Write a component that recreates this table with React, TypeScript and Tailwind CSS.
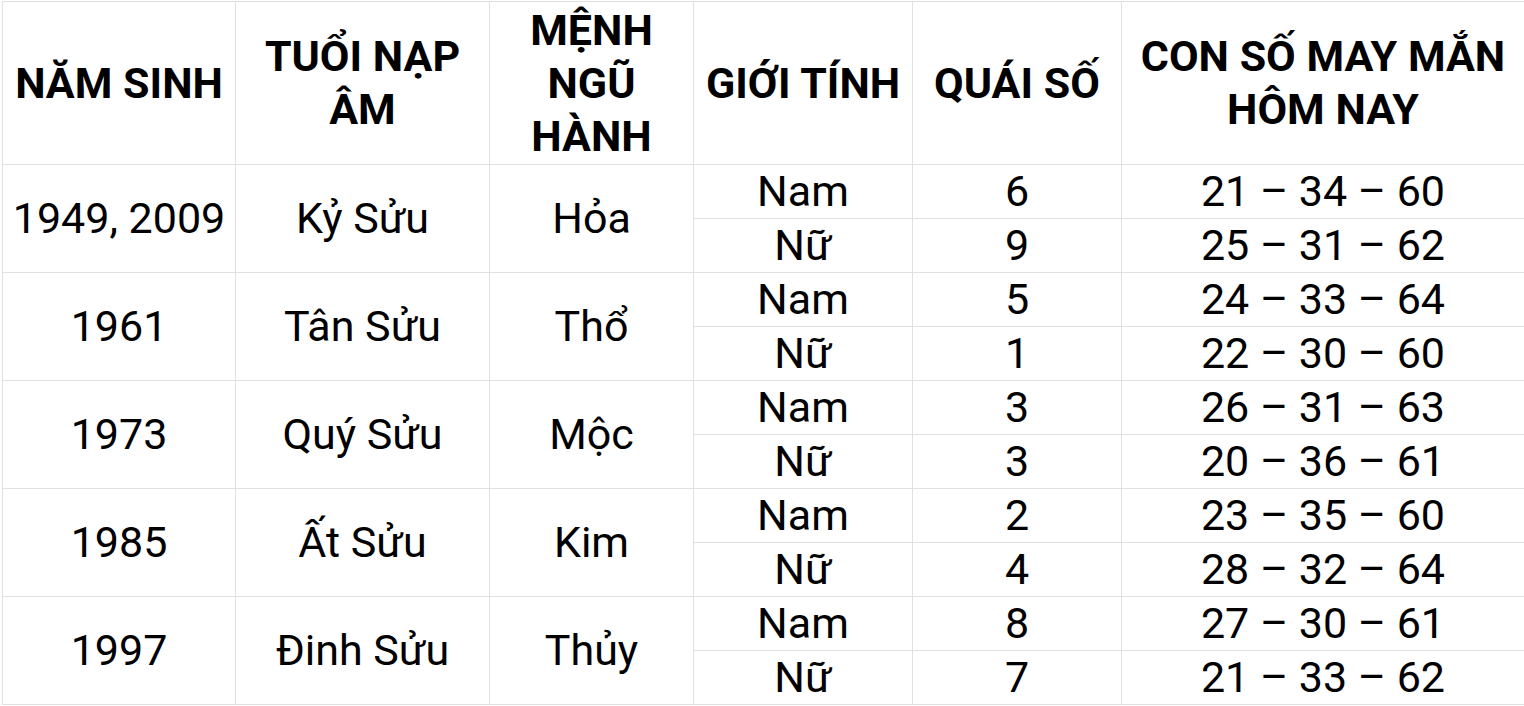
import React from "react";

const groups = [
  { year: "1949, 2009", tuoi: "Kỷ Sửu", menh: "Hỏa", rows: [["Nam", "6", "21 – 34 – 60"], ["Nữ", "9", "25 – 31 – 62"]] },
  { year: "1961", tuoi: "Tân Sửu", menh: "Thổ", rows: [["Nam", "5", "24 – 33 – 64"], ["Nữ", "1", "22 – 30 – 60"]] },
  { year: "1973", tuoi: "Quý Sửu", menh: "Mộc", rows: [["Nam", "3", "26 – 31 – 63"], ["Nữ", "3", "20 – 36 – 61"]] },
  { year: "1985", tuoi: "Ất Sửu", menh: "Kim", rows: [["Nam", "2", "23 – 35 – 60"], ["Nữ", "4", "28 – 32 – 64"]] },
  { year: "1997", tuoi: "Đinh Sửu", menh: "Thủy", rows: [["Nam", "8", "27 – 30 – 61"], ["Nữ", "7", "21 – 33 – 62"]] },
];

const headers = [
  ["NĂM SINH"],
  ["TUỔI NẠP", "ÂM"],
  ["MỆNH", "NGŨ", "HÀNH"],
  ["GIỚI TÍNH"],
  ["QUÁI SỐ"],
  ["CON SỐ MAY MẮN", "HÔM NAY"],
];

export default function App() {
  return (
    <div className="w-[1524px] h-[706px] bg-white overflow-hidden font-['Roboto','Noto_Sans',sans-serif]">
      <div className="mt-px ml-[2px] bg-[#e0e0e0] pt-px pl-px pb-px grid gap-px grid-cols-[232px_253px_203px_218px_208px_1fr] grid-rows-[162px_repeat(10,53px)] text-black">
        {headers.map((h, i) => (
          <div key={i} className="bg-white flex flex-col items-center justify-center font-bold text-[43px] leading-[53px] text-center">
            {h.map((l, j) => (
              <div key={j}>{l}</div>
            ))}
          </div>
        ))}
        {groups.map((g, gi) => (
          <React.Fragment key={gi}>
            <div className="bg-white row-span-2 flex items-center justify-center text-[43px]">{g.year}</div>
            <div className="bg-white row-span-2 flex items-center justify-center text-[43px]">{g.tuoi}</div>
            <div className="bg-white row-span-2 flex items-center justify-center text-[43px]">{g.menh}</div>
            {g.rows.map((r, ri) => (
              <React.Fragment key={ri}>
                {r.map((c, ci) => (
                  <div key={ci} className="bg-white flex items-center justify-center text-[43px] leading-none">{c}</div>
                ))}
              </React.Fragment>
            ))}
          </React.Fragment>
        ))}
      </div>
    </div>
  );
}
